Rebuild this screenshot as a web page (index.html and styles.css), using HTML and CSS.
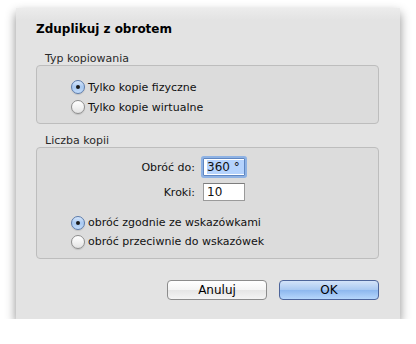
FILE: index.html
```html
<!DOCTYPE html>
<html lang="pl">
<head>
    <meta charset="UTF-8">
    <title>Zduplikuj z obrotem</title>
    <link rel="stylesheet" href="styles.css">
</head>
<body>
    <div class="dialog">
        <div class="title">Zduplikuj z obrotem</div>

        <div class="group-label">Typ kopiowania</div>
        <div class="group group-type">
            <label class="radio-row"><span class="radio checked"></span>Tylko kopie fizyczne</label>
            <label class="radio-row"><span class="radio"></span>Tylko kopie wirtualne</label>
        </div>

        <div class="group-label label-count">Liczba kopii</div>
        <div class="group group-count">
            <div class="field-row">
                <span class="field-label">Obróć do:</span>
                <span class="input focused"><span class="selected">360 °</span></span>
            </div>
            <div class="field-row second">
                <span class="field-label">Kroki:</span>
                <span class="input">10</span>
            </div>
            <div class="radios">
                <label class="radio-row"><span class="radio checked"></span>obróć zgodnie ze wskazówkami</label>
                <label class="radio-row"><span class="radio"></span>obróć przeciwnie do wskazówek</label>
            </div>
        </div>

        <div class="buttons">
            <button class="button">Anuluj</button>
            <button class="button default">OK</button>
        </div>
    </div>
</body>
</html>
```

FILE: styles.css
```css
body {
    margin: 0;
    background-color: #ffffff;
    font-family: 'DejaVu Sans', Arial, sans-serif;
    font-size: 11px;
    color: #111111;
}

.dialog {
    margin: 8px 0 0 16px;
    width: 384px;
    height: 311px;
    box-sizing: border-box;
    padding: 13px 21px 0 20px;
    background: linear-gradient(#ececec, #e3e3e3 12px, #e3e3e3);
    box-shadow: 0 5px 10px rgba(0, 0, 0, 0.45);
}

.title {
    font-size: 12px;
    font-weight: bold;
    line-height: 16px;
    color: #000000;
    margin-bottom: 15px;
}

.group-label {
    line-height: 13px;
    height: 13px;
    padding-left: 9px;
    color: #2a2a2a;
}

.label-count {
    margin-top: 10px;
}

.group {
    background-color: #dcdcdc;
    border: 1px solid #bdbdbd;
    border-radius: 4px;
    padding-left: 34px;
}

.group-type {
    height: 59px;
    box-sizing: border-box;
    padding-top: 11px;
}

.group-count {
    height: 112px;
    box-sizing: border-box;
    padding-top: 10px;
}

.radio-row {
    display: flex;
    align-items: center;
    height: 20px;
    color: #111111;
}

.radios {
    margin-top: 12px;
}

.radios .radio-row {
    height: 19px;
}

.radio {
    width: 12px;
    height: 12px;
    border-radius: 50%;
    border: 1px solid #8d8d8d;
    background: linear-gradient(#ffffff, #f2f2f2 50%, #e2e2e2);
    margin-right: 3px;
    display: flex;
    align-items: center;
    justify-content: center;
    box-shadow: 0 1px 1px rgba(0, 0, 0, 0.12);
}

.radio.checked {
    border-color: #5b7aaa;
    background: linear-gradient(#d6e6fb, #a8c8f0 50%, #c3dcfa);
}

.radio.checked::after {
    content: "";
    width: 4px;
    height: 4px;
    border-radius: 50%;
    background-color: #1a1a1a;
}

.field-row {
    display: flex;
    align-items: center;
    height: 18px;
}

.field-row.second {
    margin-top: 7px;
}

.field-label {
    width: 124px;
    text-align: right;
    margin-right: 8px;
}

.input {
    width: 42px;
    height: 18px;
    box-sizing: border-box;
    border: 1px solid #9a9a9a;
    border-top-color: #7d7d7d;
    background-color: #ffffff;
    padding-left: 3px;
    line-height: 16px;
    font-size: 12px;
}

.input.focused {
    border-color: #5f86c1;
    box-shadow: 0 0 0 2px #8eb2e4;
    border-radius: 1px;
}

.selected {
    background-color: #b5d3fd;
    padding-right: 4px;
}

.buttons {
    display: flex;
    justify-content: flex-end;
    gap: 12px;
    margin-top: 21px;
}

.button {
    width: 100px;
    height: 20px;
    box-sizing: border-box;
    border: 1px solid #8c8c8c;
    border-radius: 4px;
    background: linear-gradient(#ffffff, #f4f4f4 50%, #e6e6e6 51%, #f4f4f4);
    font-family: 'DejaVu Sans', Arial, sans-serif;
    font-size: 12px;
    color: #000000;
    padding: 0;
    line-height: 18px;
}

.button.default {
    border-color: #4d659b;
    background: linear-gradient(#d3e3f9, #a9c9f2 50%, #8db7ee 51%, #b6d6fb);
}
```
